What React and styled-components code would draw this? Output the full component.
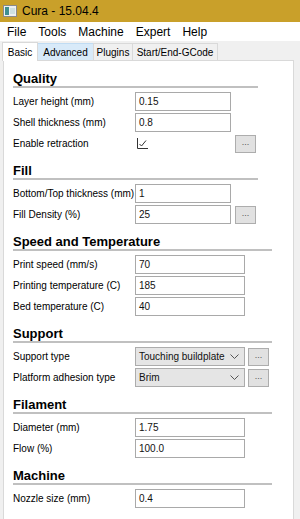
import React from 'react';
import styled, { createGlobalStyle } from 'styled-components';

const GlobalStyle = createGlobalStyle`
  html, body {
    margin: 0;
    padding: 0;
    background: #f0f0f0;
    font-family: "Liberation Sans", Arial, sans-serif;
  }
`

const Window = styled.div`
  width: 300px;
  height: 519px;
  display: flex;
  flex-direction: column;
  background: #f0f0f0;
  overflow: hidden;
`

const TitleBar = styled.div`
  height: 22px;
  flex-shrink: 0;
  background-color: #c9a02a;
  display: flex;
  align-items: center;
  gap: 5px;
  padding-left: 3px;
  font-size: 12px;
  color: #000;
`

const MenuBar = styled.div`
  height: 19px;
  flex-shrink: 0;
  background: #fff;
  display: flex;
  align-items: center;
  padding-left: 1px;
  font-size: 12px;
`

const MenuItem = styled.span`
  padding: 0 6px;
`

const TabRow = styled.div`
  height: 19px;
  flex-shrink: 0;
  display: flex;
  align-items: flex-end;
  padding-left: 3px;
`

const Tab = styled.div`
  width: ${p => p.width}px;
  height: ${p => (p.active ? '19px' : '17px')};
  display: flex;
  align-items: center;
  justify-content: center;
  font-size: 10px;
  box-sizing: border-box;
  background: ${p => (p.active ? '#fff' : p.hover ? '#d8eaf9' : '#f0f0f0')};
  border: 1px solid ${p => (p.hover ? '#c0dcf3' : '#d9d9d9')};
  border-bottom: none;
  margin-left: -1px;
  position: relative;
  z-index: ${p => (p.active ? 1 : 0)};
  margin-bottom: ${p => (p.active ? '-1px' : '0')};
`

const Body = styled.div`
  flex: 1;
  display: flex;
  padding: 0 6px 0 3px;
`

const Panel = styled.div`
  flex: 1;
  background: #fff;
  border: 1px solid #d9d9d9;
  border-bottom: none;
  padding: 10px 0 0 9px;
  display: flex;
  flex-direction: column;
  gap: 10px;
`

const Section = styled.div`
  width: ${p => p.width}px;
  display: flex;
  flex-direction: column;
`

const Heading = styled.div`
  font-size: 13px;
  font-weight: bold;
  color: #000;
  line-height: 15px;
  border-bottom: 2px solid #c0c0c0;
  margin-bottom: 2px;
`

const Row = styled.div`
  display: flex;
  align-items: center;
  height: 19px;
  margin-top: 2px;
`

const Label = styled.div`
  width: 122px;
  font-size: 10px;
  color: #000;
  white-space: nowrap;
`

const Input = styled.div`
  width: ${p => p.width}px;
  height: 19px;
  box-sizing: border-box;
  border: 1px solid #a9a9a9;
  background: #fff;
  font-size: 10px;
  padding-left: 3px;
  display: flex;
  align-items: center;
  color: #111;
  white-space: nowrap;
`

const Select = styled(Input)`
  background: #e5e5e5;
  border-color: #acacac;
  justify-content: space-between;
  padding-right: 5px;
`

const DotButton = styled.div`
  width: 21px;
  height: 18px;
  box-sizing: border-box;
  border: 1px solid #adadad;
  background: #e1e1e1;
  font-size: 9px;
  color: #555;
  display: flex;
  align-items: center;
  justify-content: center;
  margin-left: ${p => p.gap}px;
  padding-bottom: 3px;
`

const Check = styled.div`
  width: ${p => p.width}px;
  display: flex;
  align-items: center;
  padding-left: 2px;
  box-sizing: border-box;
`

const AppIcon = () => (
  <svg width="14" height="12" viewBox="0 0 14 12">
    <rect x="0.5" y="0.5" width="13" height="11" fill="#eef0f0" stroke="#8a8a8a" />
    <rect x="2" y="2" width="4" height="8" fill="#3f8f8f" />
    <rect x="7" y="3" width="5" height="6" fill="#cfe0e0" />
  </svg>
)

const Chevron = () => (
  <svg width="9" height="6" viewBox="0 0 9 6">
    <path d="M0.5 0.5 L4.5 4.5 L8.5 0.5" fill="none" stroke="#555" strokeWidth="1" />
  </svg>
)

const CheckMark = () => (
  <svg width="11" height="11" viewBox="0 0 11 11">
    <path d="M0.5 0 V10.5 H11" fill="none" stroke="#333" strokeWidth="1" />
    <path d="M2.5 6 L4.5 8 L9 2.5" fill="none" stroke="#333" strokeWidth="1" />
  </svg>
)

const TextField = ({ label, value, width, button }) => (
  <Row>
    <Label>{label}</Label>
    <Input width={width}>{value}</Input>
    {button && <DotButton gap={4}>...</DotButton>}
  </Row>
)

const SelectField = ({ label, value, width }) => (
  <Row>
    <Label>{label}</Label>
    <Select width={width}>
      <span>{value}</span>
      <Chevron />
    </Select>
    <DotButton gap={3}>...</DotButton>
  </Row>
)

export default function App() {
  return (
    <Window>
      <GlobalStyle />
      <TitleBar>
        <AppIcon />
        <span>Cura - 15.04.4</span>
      </TitleBar>
      <MenuBar>
        <MenuItem>File</MenuItem>
        <MenuItem>Tools</MenuItem>
        <MenuItem>Machine</MenuItem>
        <MenuItem>Expert</MenuItem>
        <MenuItem>Help</MenuItem>
      </MenuBar>
      <TabRow>
        <Tab active width={36}>Basic</Tab>
        <Tab hover width={57}>Advanced</Tab>
        <Tab width={40}>Plugins</Tab>
        <Tab width={86}>Start/End-GCode</Tab>
      </TabRow>
      <Body>
        <Panel>
          <Section width={245}>
            <Heading>Quality</Heading>
            <TextField label="Layer height (mm)" value="0.15" width={96} />
            <TextField label="Shell thickness (mm)" value="0.8" width={96} />
            <Row>
              <Label>Enable retraction</Label>
              <Check width={96}><CheckMark /></Check>
              <DotButton gap={4}>...</DotButton>
            </Row>
          </Section>
          <Section width={245}>
            <Heading>Fill</Heading>
            <TextField label="Bottom/Top thickness (mm)" value="1" width={96} />
            <TextField label="Fill Density (%)" value="25" width={96} button />
          </Section>
          <Section width={259}>
            <Heading>Speed and Temperature</Heading>
            <TextField label="Print speed (mm/s)" value="70" width={110} />
            <TextField label="Printing temperature (C)" value="185" width={110} />
            <TextField label="Bed temperature (C)" value="40" width={110} />
          </Section>
          <Section width={259}>
            <Heading>Support</Heading>
            <SelectField label="Support type" value="Touching buildplate" width={110} />
            <SelectField label="Platform adhesion type" value="Brim" width={110} />
          </Section>
          <Section width={259}>
            <Heading>Filament</Heading>
            <TextField label="Diameter (mm)" value="1.75" width={110} />
            <TextField label="Flow (%)" value="100.0" width={110} />
          </Section>
          <Section width={259}>
            <Heading>Machine</Heading>
            <TextField label="Nozzle size (mm)" value="0.4" width={110} />
          </Section>
        </Panel>
      </Body>
    </Window>
  );
}
